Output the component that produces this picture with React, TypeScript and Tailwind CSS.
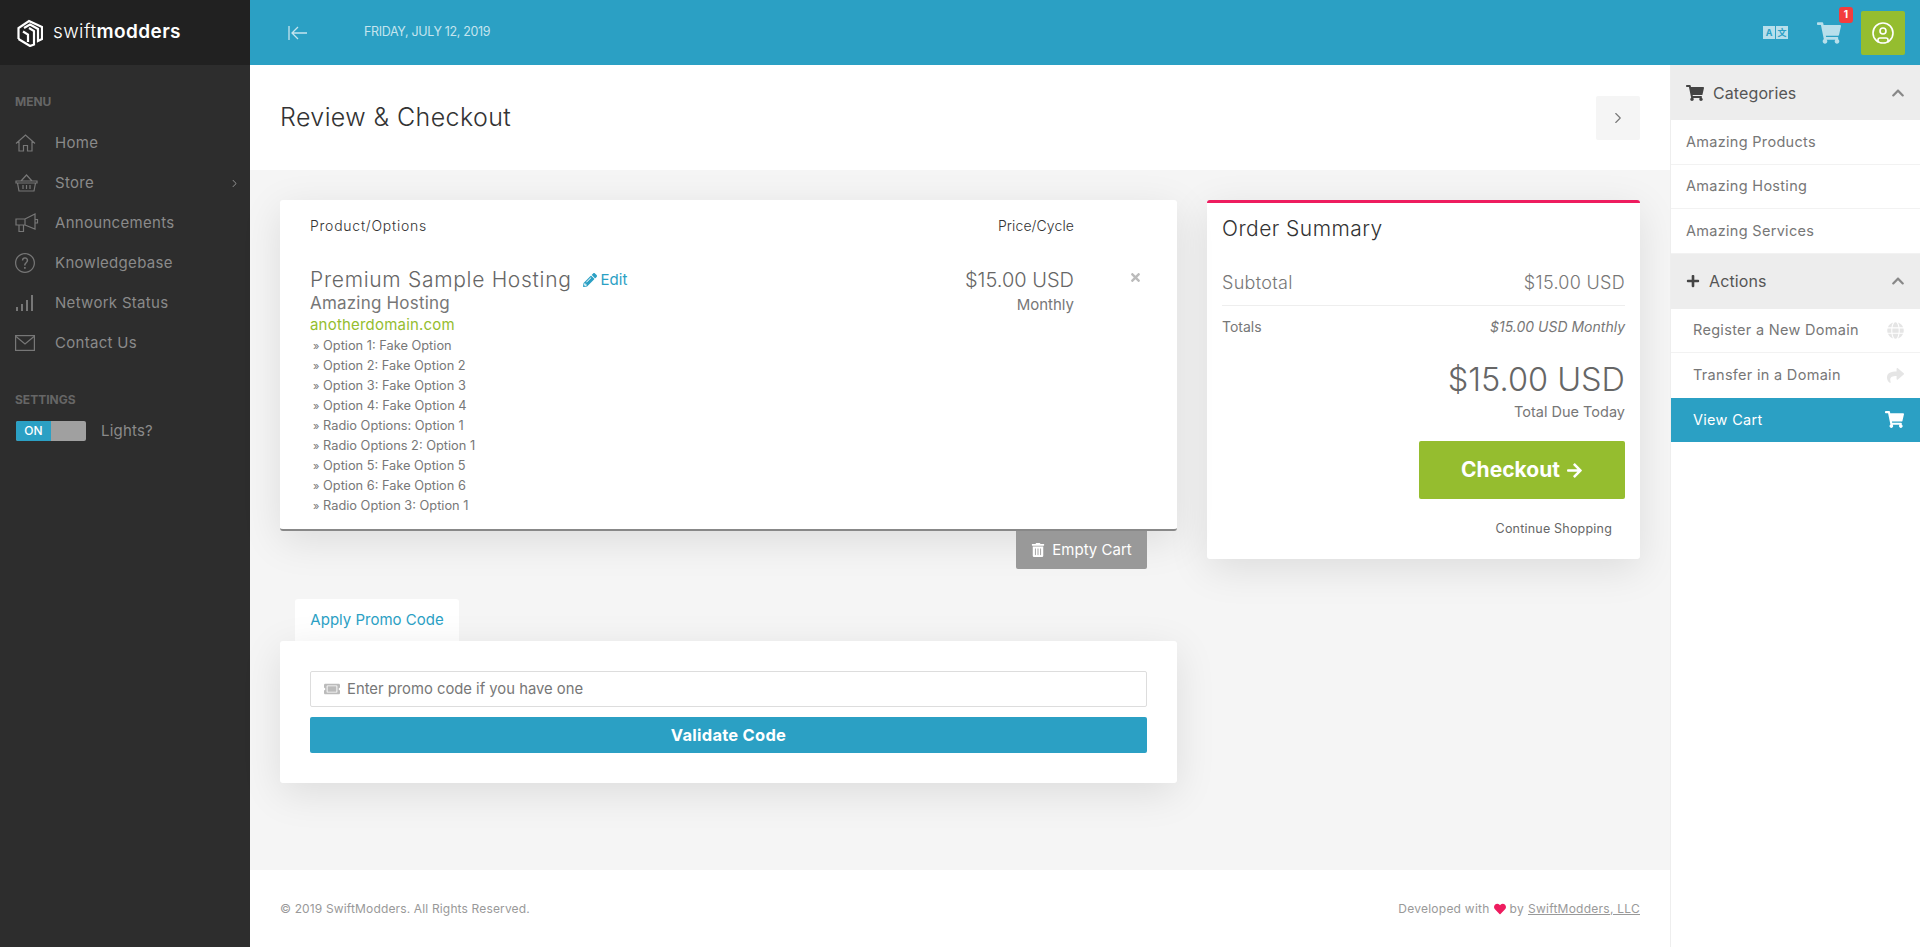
import { FaShoppingCart, FaPlus, FaGlobe, FaShare, FaPencilAlt, FaTrashAlt, FaTimes, FaTicketAlt, FaHeart, FaArrowRight, FaChevronUp } from "react-icons/fa"
import { SlQuestion, SlArrowRight } from "react-icons/sl"
import { ChevronRight, CircleUser } from "lucide-react"

const font = "font-['Inter','Liberation_Sans','Noto_Sans_CJK_SC',sans-serif]"

const Logo = () => (
  <svg width="26" height="28" viewBox="0 0 26 28" fill="none" stroke="white" strokeWidth="2.200">
    <path d="M1.500 20 V9 L12 2 L25 8 V20 L21 22 V10 L13 5.500 L7 9" />
    <path d="M12 9 L17 12 V25.500 L13 27 L1.500 20 M6 12.500 L11 15.500 V23" />
  </svg>
)

const Home = () => (
  <svg width="21" height="18" viewBox="0 0 21 18" fill="none" stroke="currentColor" strokeWidth="1.200">
    <path d="M1 9.500 L10.500 1 L20 9.500 M4 7.500 V17 H8.500 V11.500 H12.500 V17 H17 V7.500" />
  </svg>
)

const Basket = () => (
  <svg width="23" height="18" viewBox="0 0 23 18" fill="none" stroke="currentColor" strokeWidth="1.200">
    <path d="M6 7 L11.500 1 L17 7 M1 7 H22 V9 H1 Z M2.500 9 L4 17 H19 L20.500 9 M8 11 V15 M11.500 11 V15 M15 11 V15" />
  </svg>
)

const Megaphone = () => (
  <svg width="24" height="20" viewBox="0 0 24 20" fill="none" stroke="currentColor" strokeWidth="1.200">
    <path d="M1 6 H10 L20 1 V16 L10 12 H1 Z M20 6.500 H22.500 V10 H20 M10 6 V12 M4 12 V18.500 H8.500 V12" />
  </svg>
)

const Bars = () => (
  <svg width="19" height="18" viewBox="0 0 19 18" fill="currentColor">
    <rect x="1" y="13" width="2" height="4" />
    <rect x="6" y="10" width="2" height="7" />
    <rect x="11" y="6" width="2" height="11" />
    <rect x="16" y="1" width="2" height="16" />
  </svg>
)

const Envelope = () => (
  <svg width="20" height="16" viewBox="0 0 20 16" fill="none" stroke="currentColor" strokeWidth="1.200">
    <rect x="0.600" y="0.600" width="18.800" height="14.800" />
    <path d="M1 1.500 L10 9 L19 1.500" />
  </svg>
)

const menu = [
  { label: "Home", icon: <Home /> },
  { label: "Store", icon: <Basket />, more: true },
  { label: "Announcements", icon: <Megaphone /> },
  { label: "Knowledgebase", icon: <SlQuestion size={20} /> },
  { label: "Network Status", icon: <Bars /> },
  { label: "Contact Us", icon: <Envelope /> },
]

const options = [
  "Option 1: Fake Option",
  "Option 2: Fake Option 2",
  "Option 3: Fake Option 3",
  "Option 4: Fake Option 4",
  "Radio Options: Option 1",
  "Radio Options 2: Option 1",
  "Option 5: Fake Option 5",
  "Option 6: Fake Option 6",
  "Radio Option 3: Option 1",
]

const Sidebar = () => (
  <aside className="w-[250px] shrink-0 bg-[#2d2d2d]">
    <div className="h-[65px] bg-[#212121] flex items-center pl-[17px] gap-[10px]">
      <Logo />
      <span className="text-[19px] font-light text-white tracking-[0.4px]">
        swift<span className="font-semibold">modders</span>
      </span>
    </div>
    <div className="pt-[28px] pl-[15px] pr-[14px]">
      <div className="text-[12px] font-bold text-[#666] h-[22px]">MENU</div>
      <ul className="mt-[8px]">
        {menu.map((m) => (
          <li key={m.label} className="h-[40px] flex items-center text-[#8a8a8a] text-[15px] tracking-[0.3px]">
            <span className="w-[40px] flex items-center text-[#777]">{m.icon}</span>
            <span>{m.label}</span>
            {m.more && <SlArrowRight size={7} className="ml-auto mr-[-2px] text-[#aaa]" />}
          </li>
        ))}
      </ul>
      <div className="mt-[28px] text-[12px] font-bold text-[#666] h-[22px]">SETTINGS</div>
      <div className="mt-[7px] ml-[1px] flex items-center">
        <div className="w-[70px] h-[20px] rounded-[2px] bg-[#a0a0a0] overflow-hidden">
          <div className="w-[35px] h-full bg-[#2ba0c4] text-white text-[12px] font-medium flex items-center justify-center">ON</div>
        </div>
        <span className="ml-[15px] text-[15px] tracking-[0.2px] text-[#8a8a8a]">Lights?</span>
      </div>
    </div>
  </aside>
)

const Topbar = () => (
  <header className="h-[65px] bg-[#2ba0c4] flex items-center pl-[38px] pr-[15px]">
    <svg width="20" height="16" viewBox="0 0 20 16" fill="none" stroke="#c5e4ee" strokeWidth="1.300">
      <path d="M1 1 V15 M19 8 H4 M10 2 L4 8 L10 14" />
    </svg>
    <span className="ml-[56px] text-[12.500px] text-[#c5e4ee] tracking-[-0.35px]">FRIDAY, JULY 12, 2019</span>
    <div className="ml-auto flex items-center">
      <div className="flex gap-[1px] mr-[29px]">
        <span className="w-[12px] h-[13px] bg-[#b8dfeb] text-[#2ba0c4] text-[9px] font-bold flex items-center justify-center">A</span>
        <span className="w-[12px] h-[13px] bg-[#b8dfeb] text-[#2ba0c4] text-[9px] font-bold flex items-center justify-center">文</span>
      </div>
      <div className="relative mr-[20px]">
        <FaShoppingCart size={24} className="text-[#b8dfeb]" />
        <span className="absolute -top-[14px] left-[22px] w-[14px] h-[16px] rounded-[3px] bg-[#f33d3d] text-white text-[10px] font-bold flex items-center justify-center">1</span>
      </div>
      <div className="w-[44px] h-[44px] rounded-[2px] bg-[#95bd2f] flex items-center justify-center">
        <CircleUser size={24} className="text-white" strokeWidth={1.600} />
      </div>
    </div>
  </header>
)

const CartCard = () => (
  <div className="relative bg-white rounded-[3px] shadow-[0_10px_40px_rgba(0,0,0,0.1)] border-b-2 border-[#888] h-[331px] px-[30px]">
    <div className="flex pt-[15px] text-[14px] font-light text-[#333] h-[65px]">
      <span className="tracking-[0.75px]">Product/Options</span>
      <span className="ml-auto mr-[73px] tracking-[0.1px]">Price/Cycle</span>
    </div>
    <div className="flex">
      <div>
        <div className="flex items-center text-[21px] font-light tracking-[0.7px] text-[#666] leading-[30px]">
          Premium Sample Hosting
          <a className="ml-[11px] flex items-center gap-[4px] text-[15px] font-normal tracking-normal text-[#2ba0c4]">
            <FaPencilAlt size={14} /> Edit
          </a>
        </div>
        <div className="text-[17px] tracking-[0.2px] text-[#777] leading-[20px] mt-[-2px]">Amazing Hosting</div>
        <div className="text-[15px] tracking-[0.2px] text-[#95bd2f] leading-[22px] mt-[1px]">anotherdomain.com</div>
        <ul className="text-[12.800px] text-[#777] ml-[3px]">
          {options.map((o) => (
            <li key={o} className="h-[20px] leading-[20px]">
              <span className="text-[11px]">»</span> {o}
            </li>
          ))}
        </ul>
      </div>
      <div className="ml-auto mr-[73px] text-right">
        <div className="text-[20px] font-light text-[#666] leading-[30px]">$15.00 USD</div>
        <div className="text-[15px] text-[#777] leading-[20px]">Monthly</div>
      </div>
      <FaTimes size={13} className="absolute right-[35px] top-[71px] text-[#bbb]" />
    </div>
    <button className="absolute right-[30px] -bottom-[40px] w-[131px] h-[38px] rounded-b-[2px] bg-[#999] text-white text-[15px] flex items-center justify-center gap-[7px]">
      <FaTrashAlt size={14} /> Empty Cart
    </button>
  </div>
)

const Summary = () => (
  <div className="bg-white rounded-[3px] border-t-[3px] border-[#ee1c5f] shadow-[0_10px_40px_rgba(0,0,0,0.1)] h-[359px] px-[15px]">
    <div className="text-[21px] font-light tracking-[0.45px] text-[#333] mt-[11px] leading-[30px]">Order Summary</div>
    <div className="flex justify-between items-center h-[40px] mt-[22px] border-b border-[#eee] pb-[6px] text-[#777] text-[18px] font-light tracking-[0.3px]">
      <span>Subtotal</span>
      <span>$15.00 USD</span>
    </div>
    <div className="flex justify-between items-center h-[40px] text-[14px] text-[#777]">
      <span>Totals</span>
      <span className="italic">$15.00 USD Monthly</span>
    </div>
    <div className="text-right text-[32.500px] font-light text-[#666] leading-[40px] mt-[14px]">$15.00 USD</div>
    <div className="text-right text-[14.500px] text-[#777] leading-[20px] mt-[2px]">Total Due Today</div>
    <div className="flex justify-end mt-[19px]">
      <button className="w-[206px] h-[58px] rounded-[2px] bg-[#95bd2f] text-white text-[21px] font-bold flex items-center justify-center gap-[6px]">
        Checkout <FaArrowRight size={17} />
      </button>
    </div>
    <div className="text-right text-[12.500px] tracking-[0.2px] text-[#666] mt-[21px] mr-[13px]">Continue Shopping</div>
  </div>
)

const Promo = () => (
  <div className="mt-[40px] w-[897px]">
    <div className="ml-[15px] w-[164px] h-[42px] bg-white rounded-t-[3px] flex items-center justify-center text-[15px] text-[#2ba0c4]">Apply Promo Code</div>
    <div className="bg-white rounded-[3px] shadow-[0_10px_40px_rgba(0,0,0,0.1)] h-[142px] p-[30px]">
      <div className="h-[36px] border border-[#ddd] rounded-[2px] flex items-center pl-[13px] gap-[7px] text-[14.800px] text-[#777]">
        <FaTicketAlt size={16} className="text-[#bbb]" />
        Enter promo code if you have one
      </div>
      <button className="mt-[10px] w-full h-[36px] rounded-[2px] bg-[#2ba0c4] text-white text-[16.500px] font-bold tracking-[0.25px]">Validate Code</button>
    </div>
  </div>
)

const Footer = () => (
  <footer className="h-[77px] bg-white flex items-center justify-between px-[30px] text-[12px] tracking-[0.15px] text-[#999]">
    <span>© 2019 SwiftModders. All Rights Reserved.</span>
    <span className="flex items-center gap-[4px] tracking-[0.25px]">
      Developed with <FaHeart size={12} className="text-[#ee1c5f]" /> by <span className="underline">SwiftModders, LLC</span>
    </span>
  </footer>
)

const PanelHead = ({ icon, label }: { icon: React.ReactNode; label: string }) => (
  <div className="h-[55px] bg-[#ededed] flex items-center pl-[15px] pr-[15px] gap-[9px] text-[16px] tracking-[0.1px] text-[#555]">
    {icon}
    <span>{label}</span>
    <FaChevronUp size={14} className="ml-auto text-[#888]" />
  </div>
)

const RightPanel = () => (
  <aside className="w-[250px] shrink-0 bg-white border-l border-[#eee]">
    <PanelHead icon={<FaShoppingCart size={18} className="text-[#444]" />} label="Categories" />
    {["Amazing Products", "Amazing Hosting", "Amazing Services"].map((t) => (
      <div key={t} className="h-[44.500px] flex items-center px-[15px] border-b border-[#f2f2f2] text-[14.500px] tracking-[0.3px] text-[#777]">{t}</div>
    ))}
    <PanelHead icon={<FaPlus size={14} className="text-[#444]" />} label="Actions" />
    <div className="h-[44.500px] flex items-center pl-[22px] pr-[16px] border-b border-[#f2f2f2] text-[14.500px] tracking-[0.3px] text-[#777]">
      Register a New Domain
      <FaGlobe size={17} className="ml-auto text-[#e5e5e5]" />
    </div>
    <div className="h-[44.500px] flex items-center pl-[22px] pr-[16px] text-[14.500px] tracking-[0.3px] text-[#777]">
      Transfer in a Domain
      <FaShare size={17} className="ml-auto text-[#e5e5e5]" />
    </div>
    <div className="h-[44.500px] flex items-center pl-[22px] pr-[16px] bg-[#2ba0c4] text-[14.500px] tracking-[0.3px] text-white">
      View Cart
      <FaShoppingCart size={19} className="ml-auto" />
    </div>
  </aside>
)

export default function App() {
  return (
    <div className={`${font} flex h-[947px] overflow-hidden bg-white`}>
      <Sidebar />
      <div className="flex-1 flex flex-col min-w-0">
        <Topbar />
        <div className="flex-1 flex min-h-0">
          <main className="flex-1 flex flex-col min-w-0 bg-[#f5f5f5]">
            <div className="h-[105px] bg-white flex items-center justify-between px-[30px] shrink-0">
              <h1 className="text-[25px] font-light tracking-[0.4px] text-[#333]">Review &amp; Checkout</h1>
              <div className="w-[44px] h-[44px] bg-[#f5f5f5] rounded-[2px] flex items-center justify-center">
                <ChevronRight size={18} className="text-[#777]" strokeWidth={1.500} />
              </div>
            </div>
            <div className="flex-1 pt-[30px] px-[30px]">
              <div className="grid grid-cols-[897px_1fr] gap-[30px] items-start">
                <CartCard />
                <Summary />
              </div>
              <Promo />
            </div>
            <Footer />
          </main>
          <RightPanel />
        </div>
      </div>
    </div>
  )
}
